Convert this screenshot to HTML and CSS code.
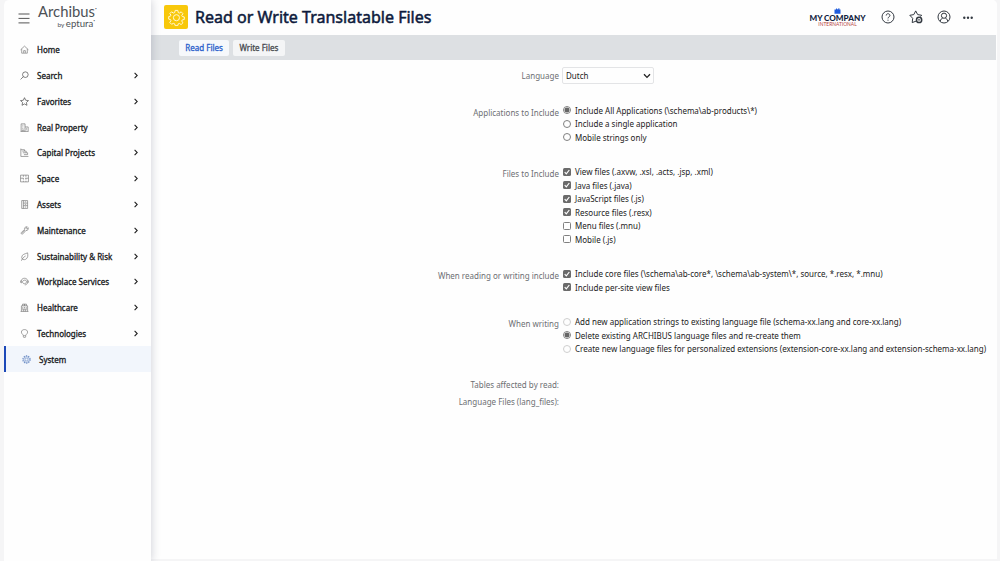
FILE: index.html
```html
<!DOCTYPE html>
<html lang="en">
<head>
<meta charset="utf-8">
<title>Read or Write Translatable Files</title>
<link rel="stylesheet" href="styles.css">
</head>
<body>
<div class="app">
  <nav class="sidebar">
    <div class="brand">
      <svg class="burger" viewBox="0 0 12 11"><path d="M.5 1h11M.5 5.4h11M.5 9.9h11"/></svg>
      <div class="logo"><div class="logo-name">Archibus<sup>·</sup></div><div class="logo-by"><small>by</small> eptura<sup>·</sup></div></div>
    </div>
    <ul class="menu">
      <li><svg class="ico" viewBox="0 0 16 16"><path d="M1 8.500 8 2l7 6.500M3 7v7.500h10V7M6.500 14v-4h3v4"/></svg><span>Home</span></li>
      <li><svg class="ico dark" viewBox="0 0 16 16"><circle cx="9.500" cy="6.500" r="5"/><path d="m6 10-5 5"/></svg><span>Search</span><svg class="chev" viewBox="0 0 4 7"><path d="m.6.8 2.600 2.700L.6 6.200"/></svg></li>
      <li><svg class="ico dark" viewBox="0 0 16 16"><path d="m8 1.200 2.100 4.600 5 .6-3.700 3.400 1 5L8 12.300l-4.400 2.500 1-5L.9 6.400l5-.6z"/></svg><span>Favorites</span><svg class="chev" viewBox="0 0 4 7"><path d="m.6.8 2.600 2.700L.6 6.200"/></svg></li>
      <li><svg class="ico" viewBox="0 0 16 16"><path d="M2 15V1.500h7V15M1 15h14M9 7h5.500v8M4 4h1.200M6.500 4h1M4 7h1.200M6.500 7h1M4 10h1.200M6.500 10h1M4 15v-2.500h3V15M11 9.500h1.500M11 12h1.500"/></svg><span>Real Property</span><svg class="chev" viewBox="0 0 4 7"><path d="m.6.8 2.600 2.700L.6 6.200"/></svg></li>
      <li><svg class="ico" viewBox="0 0 16 16"><path d="M1.500 1v14H15M1.500 3H8v2.500H4M5 8.500h6M7 11.800h6.500M8 5.500h3v3h2.500v3.300"/></svg><span>Capital Projects</span><svg class="chev" viewBox="0 0 4 7"><path d="m.6.8 2.600 2.700L.6 6.200"/></svg></li>
      <li><svg class="ico" viewBox="0 0 16 16"><path d="M1 2h14v12H1zM6 2v3M6 7.500H1M6 7v3M6 12v2M9 7.500h6M10.500 2v3M10.500 7.500V10M10.500 12v2"/></svg><span>Space</span><svg class="chev" viewBox="0 0 4 7"><path d="m.6.8 2.600 2.700L.6 6.200"/></svg></li>
      <li><svg class="ico" viewBox="0 0 16 16"><path d="M3 1h10.500v14H3zM6 1v14M6 5.500h7.500M6 10h7.500M8.500 3.300H11M8.500 7.800H11M8.500 12.500H11"/></svg><span>Assets</span><svg class="chev" viewBox="0 0 4 7"><path d="m.6.8 2.600 2.700L.6 6.200"/></svg></li>
      <li><svg class="ico" viewBox="0 0 16 16"><path d="M13 1.500 10.500 4l1.500 1.500L14.500 3c1 3-1 5.500-4 5L5 14c-1.500 1.500-4-.5-2.500-2.500L8 6c-.5-3 2-5.500 5-4.500zM9 7l-5 5.500"/></svg><span>Maintenance</span><svg class="chev" viewBox="0 0 4 7"><path d="m.6.8 2.600 2.700L.6 6.200"/></svg></li>
      <li><svg class="ico" viewBox="0 0 16 16"><path d="M13.500 1.500C9 3.500 3 4 3 9.500c0 4 4 5 7 3.500 4-2 4.500-6.500 3.500-11.500zM2.500 15.500C4 11.500 6.500 9 10 7"/></svg><span>Sustainability &amp; Risk</span><svg class="chev" viewBox="0 0 4 7"><path d="m.6.8 2.600 2.700L.6 6.200"/></svg></li>
      <li><svg class="ico" viewBox="0 0 16 16"><path d="M2.500 6C4 1 12 1 13.500 6M2.500 6C0 6.500 0 10 2.500 10.500zM13.500 6c2.500.5 2.500 4 0 4.500zM13 10.500c-.5 2.500-2 3.500-4.500 3.500M4.500 9C4 5 12 4 11.500 8.500 11 13 5 13 4.500 9z"/></svg><span>Workplace Services</span><svg class="chev" viewBox="0 0 4 7"><path d="m.6.8 2.600 2.700L.6 6.200"/></svg></li>
      <li><svg class="ico" viewBox="0 0 16 16"><path d="M2.500 15V5h11v10M1 15h14M4.500 5V2h7v3M8 2v3M6.500 3.500h3M6.500 15v-4h3v4M5 7v6M8 7v2.500M11 7v6"/></svg><span>Healthcare</span><svg class="chev" viewBox="0 0 4 7"><path d="m.6.8 2.600 2.700L.6 6.200"/></svg></li>
      <li><svg class="ico" viewBox="0 0 16 16"><path d="M6 12c0-2.500-3.500-3-3.500-6.500C2.500 2.500 5 1 8 1s5.500 1.500 5.500 4.500C13.500 9 10 9.500 10 12zM6 12v1.800C6 16 10 16 10 13.800V12"/></svg><span>Technologies</span><svg class="chev" viewBox="0 0 4 7"><path d="m.6.8 2.600 2.700L.6 6.200"/></svg></li>
      <li class="active"><svg class="ico" viewBox="0 0 16 16"><circle cx="8" cy="8" r="6.500" class="teeth"/><circle cx="8" cy="8" r="5"/><circle cx="8" cy="8" r="2.500"/></svg><span>System</span></li>
    </ul>
  </nav>
  <main class="main">
    <header class="header">
      <span class="tile"><svg viewBox="0 0 24 24"><path d="M10.100 2h3.800l.5 3 1.700.7L18.600 4l2.500 2.600-1.700 2.500.7 1.500 2.900.6v3.600l-2.900.6-.7 1.600 1.700 2.500-2.600 2.500-2.500-1.700-1.600.7-.6 2.500h-3.700l-.6-2.500-1.600-.7L5 21.500 2.500 19l1.700-2.500-.7-1.600-2.500-.6v-3.600l2.500-.6.7-1.600L2.500 6.600 5 4l2.500 1.700L9.500 5z"/><circle cx="11.900" cy="12.300" r="4.300"/></svg></span>
      <h1>Read or Write Translatable Files</h1>
      <div class="company">
        <svg viewBox="0 0 8 7"><path d="M.5 1.800h1.800V.6h1.200v.8H5V.2h1.200v1.600h1.300v4.900H.5z"/></svg>
        <b>MY COMPANY</b><span>INTERNATIONAL</span>
      </div>
      <div class="tools">
        <svg viewBox="0 0 14 14"><circle cx="7" cy="7" r="6"/><path d="M5.200 5.500c0-2.400 3.700-2.300 3.700 0C8.900 6.900 7 6.900 7 8.400M7 9.700v1"/></svg>
        <svg viewBox="0 0 14 14"><path d="M7.400 11 3.200 12.600l.5-4.300L.8 5.300l4-.7L6.700.9l2 3.700 4 .7-1.200 1.300"/><circle cx="10.100" cy="9.900" r="2.600" class="ring"/><path d="M9 9.900h2.200"/></svg>
        <svg viewBox="0 0 14 14"><circle cx="7" cy="7" r="6"/><circle cx="7" cy="5.700" r="2.600"/><path d="M3.200 11.300c.4-1.900 1.500-3 2.500-3.200M10.800 11.300c-.4-1.900-1.500-3-2.500-3.200"/></svg>
        <svg viewBox="0 0 14 14" class="dots"><circle cx="3.300" cy="7.800" r="1.200"/><circle cx="7" cy="7.800" r="1.200"/><circle cx="10.700" cy="7.800" r="1.200"/></svg>
      </div>
    </header>
    <div class="tabs"><span class="tab on">Read Files</span><span class="tab">Write Files</span></div>
    <form class="form">
      <div class="row lang"><label>Language</label><div class="select">Dutch<svg viewBox="0 0 8 6"><path d="m1 1.200 3 3.200 3-3.200"/></svg></div></div>
      <div class="row apps"><label>Applications to Include</label><div class="opts">
        <p><i class="radio on"></i><span>Include All Applications (\schema\ab-products\*)</span></p>
        <p><i class="radio"></i><span>Include a single application</span></p>
        <p><i class="radio"></i><span>Mobile strings only</span></p></div></div>
      <div class="row files"><label>Files to Include</label><div class="opts">
        <p><svg class="check" viewBox="0 0 8 8"><path d="m1.700 4.200 1.600 1.600 3-3.800"/></svg><span>View files (.axvw, .xsl, .acts, .jsp, .xml)</span></p>
        <p><svg class="check" viewBox="0 0 8 8"><path d="m1.700 4.200 1.600 1.600 3-3.800"/></svg><span>Java files (.java)</span></p>
        <p><svg class="check" viewBox="0 0 8 8"><path d="m1.700 4.200 1.600 1.600 3-3.800"/></svg><span>JavaScript files (.js)</span></p>
        <p><svg class="check" viewBox="0 0 8 8"><path d="m1.700 4.200 1.600 1.600 3-3.800"/></svg><span>Resource files (.resx)</span></p>
        <p><i class="box"></i><span>Menu files (.mnu)</span></p>
        <p><i class="box"></i><span>Mobile (.js)</span></p></div></div>
      <div class="row core"><label>When reading or writing include</label><div class="opts">
        <p><svg class="check" viewBox="0 0 8 8"><path d="m1.700 4.200 1.600 1.600 3-3.800"/></svg><span>Include core files (\schema\ab-core*, \schema\ab-system\*, source, *.resx, *.mnu)</span></p>
        <p><svg class="check" viewBox="0 0 8 8"><path d="m1.700 4.200 1.600 1.600 3-3.800"/></svg><span>Include per-site view files</span></p></div></div>
      <div class="row writing"><label>When writing</label><div class="opts">
        <p><i class="radio off"></i><span>Add new application strings to existing language file (schema-xx.lang and core-xx.lang)</span></p>
        <p><i class="radio on"></i><span>Delete existing ARCHIBUS language files and re-create them</span></p>
        <p><i class="radio off"></i><span>Create new language files for personalized extensions (extension-core-xx.lang and extension-schema-xx.lang)</span></p></div></div>
      <div class="row tables"><label>Tables affected by read:</label></div>
      <div class="row langfiles"><label>Language Files (lang_files):</label></div>
    </form>
  </main>
</div>
</body>
</html>
```
FILE: styles.css
```css
* { box-sizing: border-box; }
body { margin: 0; background: #f5f5f6; font-family: "Noto Sans", sans-serif; color: #222; overflow: hidden; }
svg { display: block; fill: none; stroke: currentColor; flex: none; }
.app { display: flex; width: 993px; height: 561px; margin-left: 4px; background: #fefefe; border-radius: 5px 5px 0 0; overflow: hidden; }
.sidebar { width: 147px; flex: none; background: #fefefe; box-shadow: 1px 0 8px rgba(60, 65, 90, .22); z-index: 1; }
.brand { display: flex; height: 36.7px; padding-left: 14px; }
.burger { width: 12px; height: 11px; margin-top: 13px; color: #555; }
.logo { width: 58px; margin: 3px 0 0 8px; color: #4d5156; font-family: Lato, sans-serif; font-weight: 400; }
.logo sup { font-size: 7px; line-height: 0; }
.logo-name { font-size: 14.8px; line-height: 16px; white-space: nowrap; }
.logo-by { font-size: 9.6px; line-height: 10px; padding-right: 1px; text-align: right; white-space: nowrap; }
.logo-by small { font-size: 6.5px; margin-right: -1px; }
.menu { list-style: none; margin: 0; padding: 0; }
.menu li { display: flex; align-items: center; height: 25.82px; padding: 0 13px 0 15.5px; font-size: 8px; -webkit-text-stroke: .3px currentColor; color: #17191c; }
.menu li span { flex: 1; margin-left: 8.5px; white-space: nowrap; }
.ico { width: 9px; height: 9px; color: #777; stroke-width: 1.2; }
.ico.dark { color: #444; }
.chev { width: 4px; height: 7px; stroke-width: 1.1; color: #222; }
.menu li.active { background: #f2f6fc; border-left: 2px solid #1d49b8; }
.active .ico { color: #6f8fc6; }
.teeth { stroke-dasharray: 2.4 1.7; stroke-width: 2; }
.main { flex: 1; min-width: 0; background: #fefefe; border-bottom: 2px solid #f5f5f6; }
.header { display: flex; align-items: center; height: 35px; padding: 0 22px 1px 13px; }
.tile { display: flex; align-items: center; justify-content: center; width: 24px; height: 24px; border-radius: 2px; background: #f8c80b; color: #fff8d8; }
.tile svg { width: 17px; height: 17px; stroke-width: 1.4; }
h1 { margin: 0 0 0 7px; font-size: 16.05px; line-height: 24px; font-weight: 400; -webkit-text-stroke: .5px currentColor; color: #0d1a3c; white-space: nowrap; }
.company { display: flex; flex-direction: column; align-items: center; width: 56px; margin-left: auto; margin-right: 15px; font-family: Lato, sans-serif; color: #12223f; white-space: nowrap; }
.company svg { width: 7px; height: 6px; fill: #1f5bdc; stroke: none; }
.company b { font-size: 8.1px; line-height: 8px; font-weight: 900; }
.company span { font-size: 4.9px; line-height: 5px; color: #b5443e; }
.tools { display: flex; gap: 14px; color: #333941; }
.tools svg { width: 14px; height: 14px; stroke-width: 1; }
.tools .dots { margin-left: -3.5px; }
.ring { stroke-width: 1.5; }
.tools .dots { fill: currentColor; stroke: none; }
.tabs { display: flex; align-items: center; gap: 4px; height: 25px; margin-right: 1px; padding-left: 28px; background: #dde0e3; }
.tab { height: 16px; padding: 0 6.3px; border-radius: 2px; background: #f4f5f6; font-size: 8px; line-height: 16px; -webkit-text-stroke: .3px currentColor; color: #484b50; white-space: nowrap; }
.tab.on { background: #f6f8fb; color: #2a60cb; }
.form { font-size: 8px; color: #222; }
.row { display: flex; }
.row label { width: 408px; flex: none; text-align: right; color: #6d6f73; line-height: 13.5px; padding-top: 2px; }
.opts { margin-left: 3.5px; }
.opts p { display: flex; align-items: center; height: 13.5px; margin: 0; white-space: nowrap; }
.opts span { margin-left: 4.5px; }
.lang { align-items: center; height: 17px; margin-top: 7px; }
.lang label { padding: 0; }
.select { display: flex; align-items: center; justify-content: space-between; width: 92px; height: 17px; margin-left: 3px; padding: 0 2px 0 3px; border: 1px solid #e3e4e6; border-radius: 2px; }
.select svg { width: 8px; height: 6px; stroke-width: 1.3; }
.apps { margin-top: 19.6px; }
.files { margin-top: 21px; }
.core { margin-top: 20.7px; }
.writing { margin-top: 21px; }
.tables { margin-top: 21.2px; }
.langfiles { margin-top: 1.3px; }
.radio, .box, .check { width: 8px; height: 8px; flex: none; }
.radio, .box { border: 1px solid #808080; }
.radio { border-radius: 50%; }
.radio.on { background: radial-gradient(circle, #666 0 2.1px, #fefefe 2.8px); }
.radio.off { border-color: #cfcfcf; }
.box, .check { border-radius: 1.5px; }
.check { background: #6b6b6b; color: #fff; stroke-width: 1.2; }
```
